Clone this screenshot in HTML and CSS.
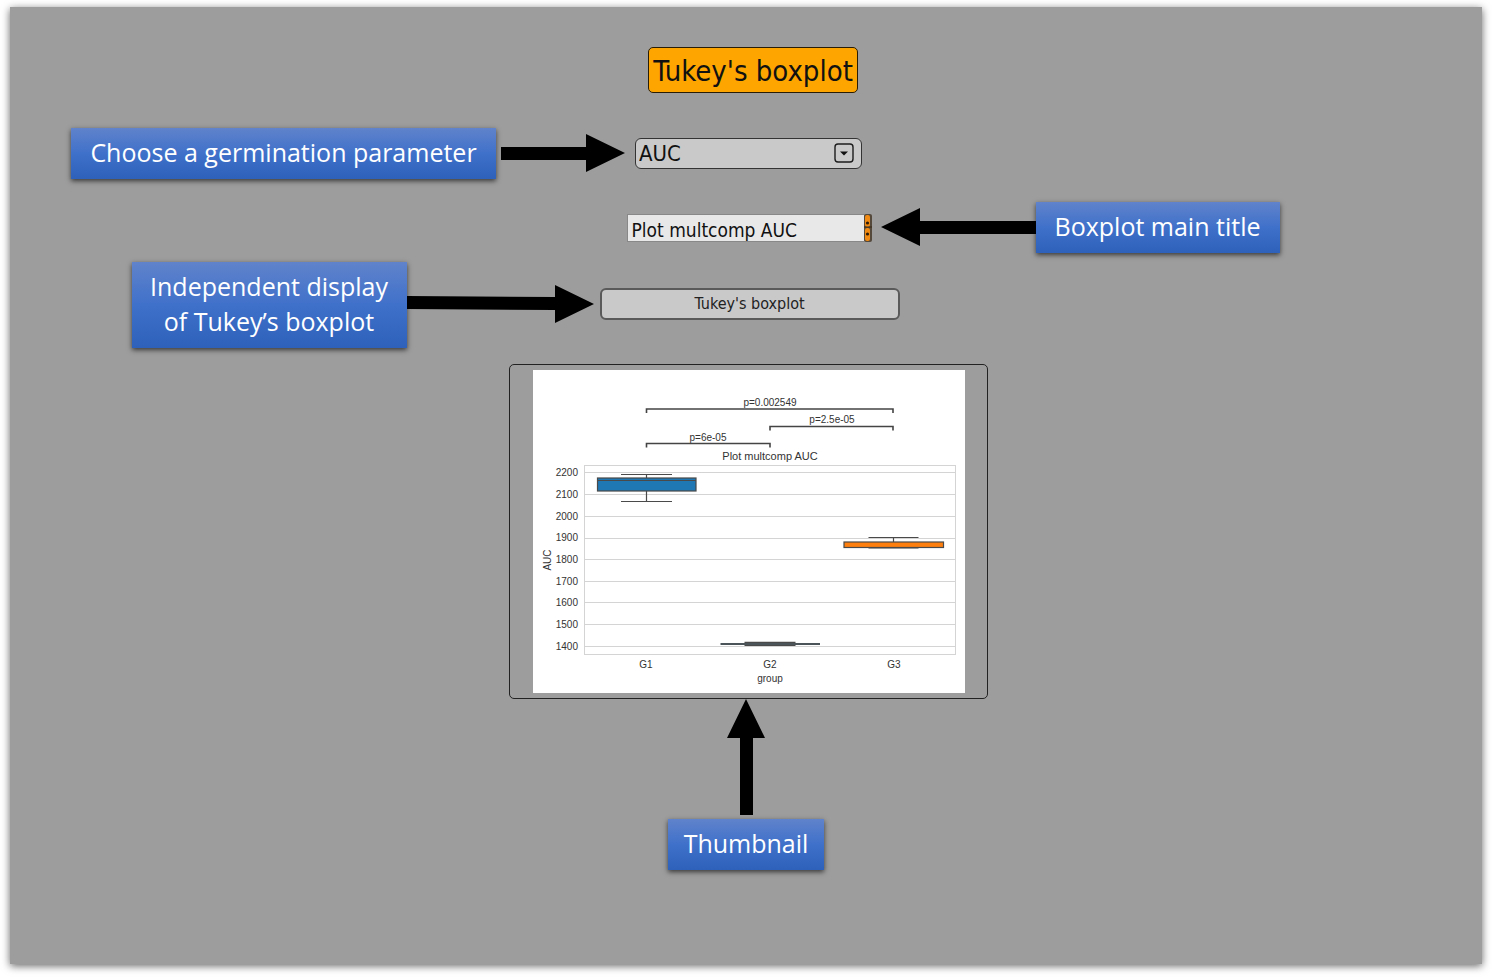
FILE: index.html
```html
<!DOCTYPE html>
<html lang="en">
<head>
<meta charset="utf-8">
<meta name="viewport" content="width=device-width, initial-scale=1">
<title>Tukey's boxplot</title>
<link rel="stylesheet" href="styles.css">
</head>
<body>
<main class="panel">
  <div class="row row-title">
    <h1 class="title">Tukey's boxplot</h1>
  </div>

  <div class="row row-parameter">
    <div class="side side-left">
      <label class="callout callout-wide" for="parameter">Choose a germination parameter</label>
      <svg class="arrow arrow-parameter" width="124" height="40" viewBox="0 0 124 40" aria-hidden="true"><path d="M0 13H85V0L124 19 85 38V26H0Z"/></svg>
    </div>
    <div class="select-box">
      <select class="select" id="parameter"><option>AUC</option></select>
      <svg class="select-icon" width="20" height="20" viewBox="0 0 20 20" aria-hidden="true"><rect x="1" y="1" width="18" height="18" rx="3" fill="none" stroke="#1c1c1c" stroke-width="1.4"/><path d="M6 8.5H14L10 12.5Z" fill="#111"/></svg>
    </div>
  </div>

  <div class="row row-name">
    <div class="name-box">
      <input class="name-input" id="plot-title" type="text" value="Plot multcomp AUC">
      <svg class="scroller" width="8" height="28" viewBox="0 0 8 28" aria-hidden="true"><rect width="8" height="28" rx="2" fill="#54493b"/><rect x="1" y="1" width="5" height="12" rx="2" fill="#f08a12"/><rect x="1" y="14" width="5" height="13" rx="2" fill="#f08a12"/><circle cx="3.5" cy="9" r="1.6" fill="#2b1a05"/><circle cx="3.5" cy="20" r="1.6" fill="#2b1a05"/><path d="M0 13H8" stroke="#3a2a18"/></svg>
    </div>
    <div class="side side-right">
      <svg class="arrow" width="155" height="40" viewBox="0 0 155 40" aria-hidden="true"><path d="M155 13H39V0L0 19 39 38V26H155Z"/></svg>
      <label class="callout callout-medium" for="plot-title">Boxplot main title</label>
    </div>
  </div>

  <div class="row row-open">
    <div class="side side-left">
      <div class="callout callout-tall">Independent display<br>of Tukey’s boxplot</div>
      <svg class="arrow" width="187" height="40" viewBox="0 0 187 40" aria-hidden="true"><path d="M0 11 148 12V0L187 19 148 38V25L0 24Z"/></svg>
    </div>
    <button class="open-button" type="button">Tukey's boxplot</button>
  </div>

  <div class="row row-thumbnail">
    <button class="thumbnail" type="button" aria-label="Thumbnail">
      <svg class="chart" width="432" height="323" viewBox="532 370 432 323">
        <rect x="532" y="370" width="432" height="323" fill="#fff"/>
        <g class="grid">
          <path d="M584 472.500H954M584 494.500H954M584 516.500H954M584 538.500H954M584 559.500H954M584 581.500H954M584 602.500H954M584 624.500H954M584 646.500H954"/>
          <rect x="583.500" y="465.500" width="371" height="189"/>
        </g>
        <g class="bracket">
          <path d="M645.500 413V409H892V413M769 430.500V426.500H892V430.500M645.500 447.500V443.500H769V447.500"/>
        </g>
        <g class="box">
          <path d="M620 474.500H671M645.500 474.500V478M620 501.500H671M645.500 491V501.500"/>
          <rect x="596.500" y="478" width="98.500" height="13" fill="#1f77b4"/>
          <path d="M596 480.500H695"/>
          <path d="M867.500 537.500H917.500M892.500 537.500V542M867.500 548H917.500"/>
          <rect x="843" y="542" width="99.500" height="5.500" fill="#ff7f0e"/>
          <path d="M743.500 642.300H794.500M743.500 645.500H794.500"/>
          <path d="M719.500 644H819" stroke="#4a5459" stroke-width="2"/>
        </g>
        <g class="ticks ticks-y">
          <text x="577" y="476">2200</text><text x="577" y="498">2100</text><text x="577" y="520">2000</text>
          <text x="577" y="541">1900</text><text x="577" y="563">1800</text><text x="577" y="585">1700</text>
          <text x="577" y="606">1600</text><text x="577" y="628">1500</text><text x="577" y="650">1400</text>
        </g>
        <g class="ticks ticks-x">
          <text x="645" y="668">G1</text><text x="769" y="668">G2</text><text x="893" y="668">G3</text>
          <text x="769" y="682">group</text>
          <text x="769" y="406">p=0.002549</text><text x="831" y="423">p=2.5e-05</text><text x="707" y="441">p=6e-05</text>
          <text transform="translate(550 560) rotate(-90)">AUC</text>
        </g>
        <text class="chart-title" x="769" y="460">Plot multcomp AUC</text>
      </svg>
    </button>
  </div>

  <div class="note">
    <svg class="arrow" width="40" height="116" viewBox="0 0 40 116" aria-hidden="true"><path d="M20 0 39 39H27V116H14V39H1Z"/></svg>
    <div class="callout">Thumbnail</div>
  </div>
</main>
</body>
</html>
```
FILE: styles.css
```css
* { box-sizing: border-box; }

body {
  margin: 0;
  padding: 7px 10px 13px;
  min-height: 100vh;
  display: flex;
  background: #fff;
  color: #111;
  font-family: "DejaVu Sans Condensed", "DejaVu Sans", sans-serif;
}

.panel {
  flex: 1;
  display: flex;
  flex-direction: column;
  padding: 40px 0;
  background: #9d9d9d;
  box-shadow: 0 2px 8px rgba(0, 0, 0, 0.6);
}

.row {
  display: grid;
  grid-template-columns: 1fr auto 1fr;
  align-items: center;
  padding-left: 6px;
}

.row > * { grid-column: 2; }
.row > .side-left { grid-column: 1; }
.row > .side-right { grid-column: 3; }

.row-title { padding-left: 14px; }
.row-parameter { margin-top: 35px; padding-left: 5px; }
.row-name { margin-top: 23px; }
.row-open { margin-top: 9px; padding-left: 7px; }
.row-thumbnail { margin-top: 16px; padding-left: 5px; }

.side {
  display: flex;
  align-items: center;
}

.side-left { justify-content: flex-end; padding-right: 6px; }
.row-parameter .side-left { padding-right: 10px; }
.side-right { padding-left: 9px; }

.title {
  margin: 0;
  width: 210px;
  padding: 2px 0 0;
  border: 1px solid #2a1d05;
  border-radius: 5px;
  background: #ffa500;
  font-size: 29px;
  font-weight: 400;
  line-height: 42px;
  text-align: center;
  white-space: nowrap;
}

.callout {
  padding: 7px 16px 9px;
  background: linear-gradient(#6083cb, #3e70ca 52%, #2e61ba);
  box-shadow: 0 2px 5px rgba(0, 0, 0, 0.65);
  color: #fff;
  font-family: "Open Sans", "Noto Sans", sans-serif;
  font-size: 25px;
  line-height: 35px;
  text-align: center;
  white-space: nowrap;
}

.callout-wide { min-width: 425px; }
.callout-medium { min-width: 244px; }
.callout-tall { min-width: 275px; }

.arrow {
  display: block;
  flex: none;
  fill: #000;
}

.arrow-parameter { margin-left: 5px; }

.select-box { position: relative; }

.select {
  appearance: none;
  display: block;
  width: 227px;
  height: 31px;
  padding: 0 36px 0 3px;
  border: 1px solid #333;
  border-radius: 6px;
  background: #c9c9c9;
  color: #111;
  font-family: inherit;
  font-size: 22px;
}

.select-icon {
  position: absolute;
  top: 5px;
  right: 8px;
  pointer-events: none;
}

.name-box {
  display: flex;
  width: 245px;
}

.name-input {
  flex: 1;
  min-width: 0;
  height: 28px;
  padding: 4px 4px 0;
  border: 1px solid #888;
  border-right: 0;
  border-radius: 0;
  background: #e8e8e8;
  color: #111;
  font-family: inherit;
  font-size: 19px;
}

.scroller { flex: none; }

.open-button {
  width: 300px;
  height: 32px;
  margin-bottom: 3px;
  padding: 0;
  border: 2px solid #5a5a5a;
  border-radius: 6px;
  background: #c9c9c9;
  color: #222;
  font-family: inherit;
  font-size: 16px;
}

.thumbnail {
  width: 479px;
  padding: 5px 0;
  border: 1px solid #222;
  border-radius: 5px;
  background: none;
}

.chart {
  display: block;
  margin: 0 auto;
  font-family: "Liberation Sans", Arial, sans-serif;
  font-size: 10px;
  fill: #333;
}

.grid { fill: none; stroke: #d4d4d4; }
.bracket { fill: none; stroke: #444; stroke-width: 1.6px; }
.box { stroke: #4a4a4a; stroke-width: 1.2px; }
.ticks-y { text-anchor: end; }
.ticks-x { text-anchor: middle; }
.chart-title { font-size: 11px; text-anchor: middle; }

.note {
  display: flex;
  flex-direction: column;
  align-items: center;
  gap: 4px;
}
```
